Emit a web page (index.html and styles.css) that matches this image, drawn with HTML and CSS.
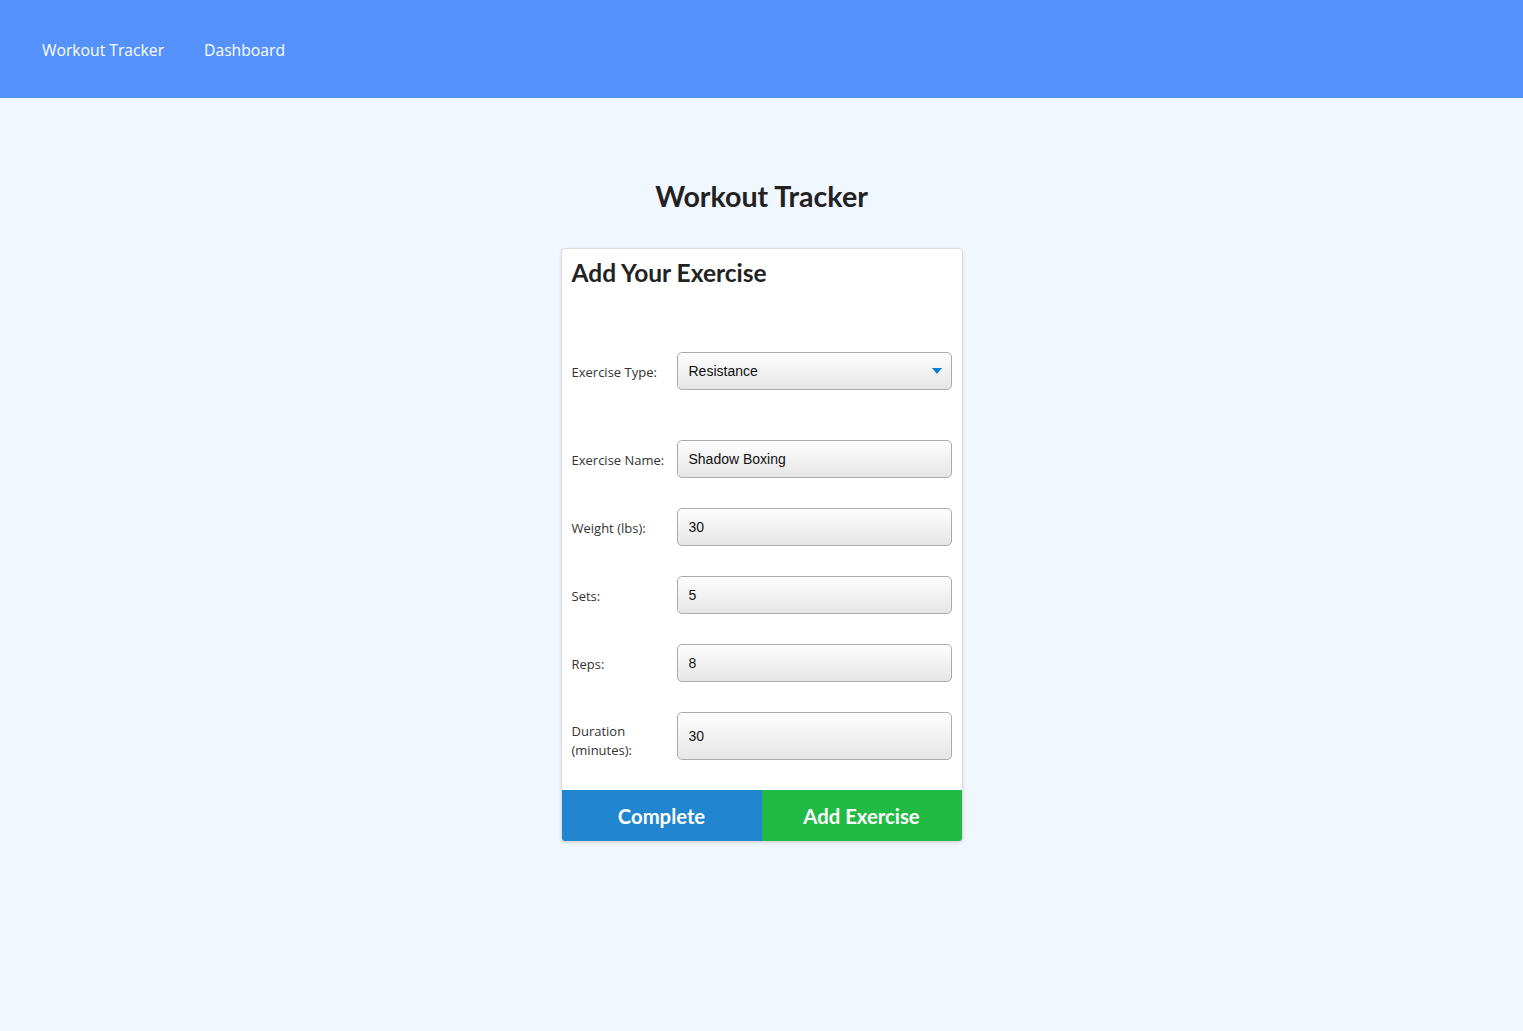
FILE: index.html
```html
<!DOCTYPE html>
<html lang="en">
<head>
<meta charset="utf-8">
<title>Workout Tracker</title>
<link rel="stylesheet" href="styles.css">
</head>
<body>
<header class="topbar">
  <nav class="nav">
    <a class="nav-link" href="#">Workout Tracker</a>
    <a class="nav-link" href="#">Dashboard</a>
  </nav>
</header>
<main class="main">
  <h1 class="page-title">Workout Tracker</h1>
  <section class="card">
    <h2 class="card-title">Add Your Exercise</h2>
    <form class="form">
      <div class="row row-type">
        <label class="label">Exercise Type:</label>
        <div class="select">
          <span>Resistance</span>
          <svg class="caret" width="10" height="6" viewBox="0 0 10 6"><path d="M0 0h10L5 6z" fill="#0a7fc6"/></svg>
        </div>
      </div>
      <div class="row">
        <label class="label">Exercise Name:</label>
        <input class="input" type="text" value="Shadow Boxing">
      </div>
      <div class="row">
        <label class="label">Weight (lbs):</label>
        <input class="input" type="text" value="30">
      </div>
      <div class="row">
        <label class="label">Sets:</label>
        <input class="input" type="text" value="5">
      </div>
      <div class="row">
        <label class="label">Reps:</label>
        <input class="input" type="text" value="8">
      </div>
      <div class="row">
        <label class="label label-low">Duration<br>(minutes):</label>
        <input class="input input-tall" type="text" value="30">
      </div>
    </form>
    <div class="actions">
      <button class="btn btn-blue" type="button">Complete</button>
      <button class="btn btn-green" type="button">Add Exercise</button>
    </div>
  </section>
</main>
</body>
</html>
```

FILE: styles.css
```css
* { box-sizing: border-box; }
html, body { margin: 0; padding: 0; }
body {
  background: #f0f7ff;
  font-family: "Open Sans", "Noto Sans", sans-serif;
  color: #222;
  min-height: 1031px;
}
.topbar {
  background: #5592fe;
  height: 98px;
  display: flex;
  align-items: center;
  padding-left: 42px;
}
.nav { display: flex; gap: 40px; }
.nav-link {
  color: #fff;
  text-decoration: none;
  font-size: 15.7px;
  line-height: 22px;
  margin-top: 2px;
}
.main {
  display: flex;
  flex-direction: column;
  align-items: center;
}
.page-title {
  font-family: Lato, sans-serif;
  font-weight: 700;
  font-size: 28.6px;
  line-height: 36px;
  color: #222;
  margin: 80px 0 0 0;
}
.card {
  margin-top: 34px;
  width: 402px;
  background: #fff;
  border: 1px solid #dcdcdc;
  border-radius: 4px;
  box-shadow: 0 1px 3px rgba(0,0,0,0.12);
  overflow: hidden;
}
.card-title {
  font-family: Lato, sans-serif;
  font-weight: 700;
  font-size: 24.5px;
  line-height: 32px;
  color: #222;
  margin: 8px 0 0 10px;
}
.form {
  padding: 0 10px 30px 10px;
  display: flex;
  flex-direction: column;
  gap: 30px;
}
.row {
  display: grid;
  grid-template-columns: 105px 1fr;
  align-items: center;
}
.row-type { margin-top: 63px; margin-bottom: 20px; }
.label {
  font-size: 13px;
  line-height: 19px;
  color: #333;
  padding-top: 2px;
}
.label-low { padding-top: 10px; }
.input, .select {
  height: 38px;
  border: 1px solid #ababab;
  border-radius: 5px;
  background: linear-gradient(#fdfdfd, #e6e6e6);
  font-family: "Liberation Sans", Arial, sans-serif;
  font-size: 14px;
  color: #111;
  padding: 0 11px;
  width: 100%;
}
.input-tall { height: 48px; }
.select {
  display: flex;
  align-items: center;
  justify-content: space-between;
  padding-right: 9px;
}
.actions {
  display: grid;
  grid-template-columns: 1fr 1fr;
}
.btn {
  border: 0;
  height: 51px;
  color: #fff;
  font-family: Lato, sans-serif;
  font-weight: 700;
  font-size: 20.3px;
  cursor: pointer;
}
.btn-blue { background: #2285d0; }
.btn-green { background: #21ba45; }
```
